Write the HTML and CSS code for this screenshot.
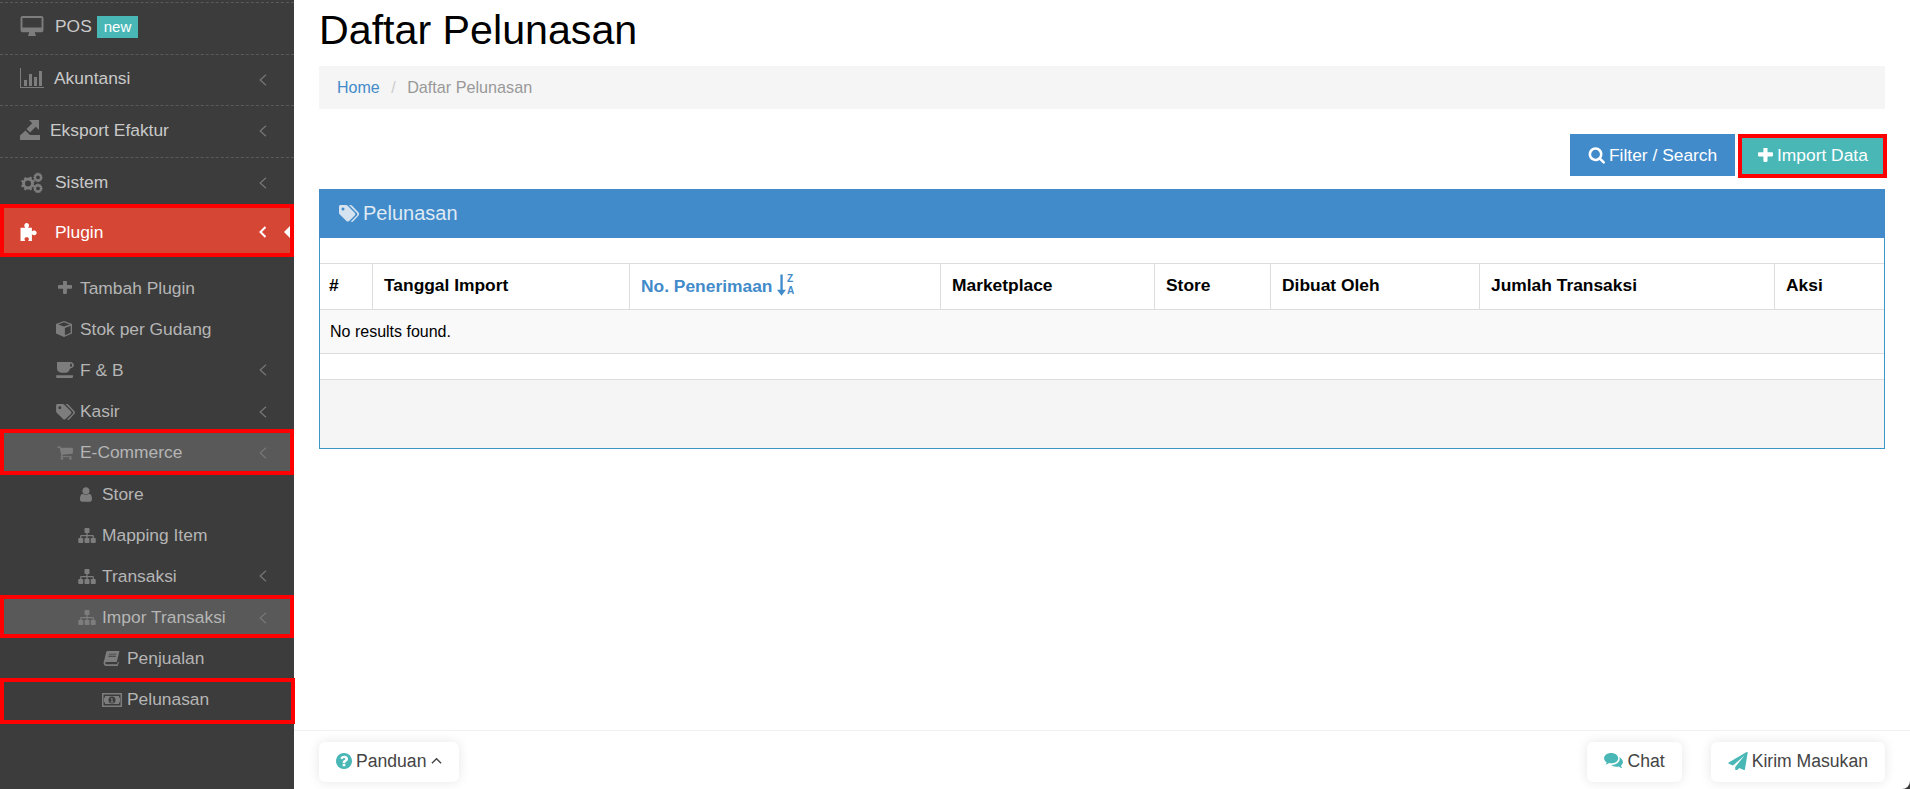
FILE: index.html
```html
<!DOCTYPE html>
<html lang="id">
<head>
<meta charset="utf-8">
<title>Daftar Pelunasan</title>
<link rel="stylesheet" href="styles.css">
</head>
<body>
<svg class="sprite" aria-hidden="true">
  <symbol id="i-desktop" viewBox="0 0 24 22"><path d="M2 0h20a2 2 0 0 1 2 2v13a2 2 0 0 1-2 2h-7c0 1.500.6 2.200 1 3v1H8v-1c.4-.8 1-1.500 1-3H2a2 2 0 0 1-2-2V2a2 2 0 0 1 2-2zm0 2v10h20V2z"/></symbol>
  <symbol id="i-chart" viewBox="0 0 24 20"><path d="M0 0h1v19h23v1H0z"/><path d="M4 12h3v6H4zM9 6h3v12H9zM14 9h3v9h-3zM19 3h3v15h-3z"/></symbol>
  <symbol id="i-export" viewBox="0 0 20 20"><path d="M9 0h10v10l-3.200-3.200L10 12.500 6.500 9l5.700-5.800z"/><path d="M0 15.500l5.500-5 4.500 4.500H20v5H0z"/></symbol>
  <symbol id="i-cogs" viewBox="0 0 23 21"><path d="M8 5.500l1.300.3.800-1.300 2 1.100-.6 1.400 1 1 1.400-.6 1.100 2-1.300.8.300 1.300-.3 1.300 1.300.8-1.100 2-1.400-.6-1 1 .6 1.400-2 1.100-.8-1.300L8 17.500l-1.300-.3-.8 1.300-2-1.100.6-1.400-1-1-1.400.6-1.100-2 1.300-.8-.3-1.300.3-1.300L.9 9.800 2 7.800l1.400.6 1-1-.6-1.400 2-1.100.8 1.300zm0 3a3 3 0 1 0 0 6 3 3 0 0 0 0-6z"/><path d="M18 0l.8 1.400 1.500-.4.400 1.500 1.500.4-.4 1.500 1.200 1-1.200 1 .4 1.500-1.500.4-.4 1.500-1.500-.4-.8 1-.8-1-1.500.4-.4-1.500-1.500-.4.400-1.500-1.200-1 1.200-1-.4-1.500 1.500-.4.400-1.500 1.500.4zm0 3.500a1.900 1.900 0 1 0 0 3.800 1.900 1.900 0 0 0 0-3.800zM18 11l.8 1.400 1.500-.4.400 1.500 1.500.4-.4 1.500 1.200 1-1.200 1 .4 1.500-1.500.4-.4 1.500-1.500-.4-.8 1-.8-1-1.500.4-.4-1.500-1.500-.4.400-1.500-1.200-1 1.200-1-.4-1.500 1.500-.4.400-1.500 1.500.4zm0 3.500a1.900 1.900 0 1 0 0 3.800 1.900 1.900 0 0 0 0-3.800z" fill-rule="evenodd"/></symbol>
  <symbol id="i-puzzle" viewBox="0 0 20 19"><path d="M0 5h5c-.6-.8-1-1.400-1-2.300C4 1.100 5 0 6.500 0S9 1.100 9 2.700c0 .9-.4 1.500-1 2.300h4v4c.8-.8 1.500-1.100 2.500-1.100 1.600 0 2.500 1.100 2.500 2.500S16.100 13 14.500 13c-1 0-1.700-.4-2.500-1.100V19H8c.5-.7.800-1.300.8-2 0-1.300-1-2-2.300-2s-2.300.7-2.300 2c0 .7.300 1.300.8 2H0z"/></symbol>
  <symbol id="i-plus" viewBox="200 240 1400 1400"><path d="M1600 736v192q0 40-28 68t-68 28h-416v416q0 40-28 68t-68 28h-192q-40 0-68-28t-28-68v-416h-416q-40 0-68-28t-28-68v-192q0-40 28-68t68-28h416v-416q0-40 28-68t68-28h192q40 0 68 28t28 68v416h416q40 0 68 28t28 68z"/></symbol>
  <symbol id="i-cube" viewBox="0 0 18 18"><path d="M9 0l9 3.500V14l-9 4-9-4V3.500zM2.500 3.800L9 6.300l6.500-2.500L9 1.400zM10 7.800v8.300l6.500-3V5.300z"/></symbol>
  <symbol id="i-coffee" viewBox="0 0 20 18"><path d="M1 0h15c2.200 0 4 1.500 4 3.500S18.200 7.200 16 7.200h-.4c-.5 2.700-2.300 4.800-5 4.800H6C3 12 1 9.500 1 7zM15.800 1.800v3.600h.4c1 0 1.800-.8 1.800-1.800s-.8-1.800-1.800-1.800zM0 15h19v1.500c0 .8-.7 1.500-1.500 1.500h-16C.7 18 0 17.300 0 16.500z"/></symbol>
  <symbol id="i-tag" viewBox="0 0 20 17"><path d="M1.500 0H7c.6 0 1.200.3 1.700.7l7 7c.8.800.8 2 0 2.800l-5.500 5.500c-.8.800-2 .8-2.800 0l-7-7C0 8.600 0 8 0 7.300V1.500C0 .7.700 0 1.500 0zM4 2.500A1.500 1.500 0 1 0 4 5.500 1.500 1.500 0 0 0 4 2.500z"/><path d="M10 0h1.500c.6 0 1.200.3 1.700.7l6.300 6.900c.8.800.8 2 0 2.800l-5.500 6c-.6.600-1.400.6-2.200.2l6-6.200c.6-.7.600-1.800 0-2.500z"/></symbol>
  <symbol id="i-cart" viewBox="0 0 1792 1792"><path d="M704 1536q0 52-38 90t-90 38-90-38-38-90 38-90 90-38 90 38 38 90zm896 0q0 52-38 90t-90 38-90-38-38-90 38-90 90-38 90 38 38 90zm128-1088v512q0 24-16.500 42.500t-40.500 21.500l-1044 122q13 60 13 70 0 16-24 64h920q26 0 45 19t19 45-19 45-45 19h-1024q-26 0-45-19t-19-45q0-11 8-31.500t16-36 21.500-40 15.500-29.500l-177-823h-204q-26 0-45-19t-19-45 19-45 45-19h256q16 0 28.500 6.500t19.500 15.500 13 24.500 8 26 5.500 29.500 4.500 26h1201q26 0 45 19t19 45z"/></symbol>
  <symbol id="i-user" viewBox="200 100 1400 1600"><path d="M1536 1399q0 109-62.500 187t-150.500 78h-854q-88 0-150.500-78t-62.500-187q0-85 8.500-160.500t31.500-152 58.500-131 94-89 134.500-34.500q131 128 313 128t313-128q76 0 134.500 34.500t94 89 58.500 131 31.500 152 8.500 160.500zm-256-887q0 159-112.500 271.500t-271.500 112.500-271.500-112.500-112.500-271.500 112.500-271.500 271.500-112.500 271.500 112.500 112.500 271.500z"/></symbol>
  <symbol id="i-sitemap" viewBox="0 128 1792 1536"><path d="M1792 1248v320q0 40-28 68t-68 28h-320q-40 0-68-28t-28-68v-320q0-40 28-68t68-28h96v-192h-512v192h96q40 0 68 28t28 68v320q0 40-28 68t-68 28h-320q-40 0-68-28t-28-68v-320q0-40 28-68t68-28h96v-192h-512v192h96q40 0 68 28t28 68v320q0 40-28 68t-68 28h-320q-40 0-68-28t-28-68v-320q0-40 28-68t68-28h96v-192q0-52 38-90t90-38h512v-192h-96q-40 0-68-28t-28-68v-320q0-40 28-68t68-28h320q40 0 68 28t28 68v320q0 40-28 68t-68 28h-96v192h512q52 0 90 38t38 90v192h96q40 0 68 28t28 68z"/></symbol>
  <symbol id="i-book" viewBox="0 0 18 17"><path d="M4.500 0H18l-3 12.500H3.300C2.300 12.500 2 13.200 2 13.800c0 .7.500 1.200 1.300 1.200h12.200L16 12.900l1.800-.9L16 17H3C1.200 17 0 15.600 0 13.800c0-.6.100-1.100.3-1.700L3 1.500C3.200.6 3.700 0 4.500 0zM6 3v1h8.500V3zM5.500 5.500v1H14v-1z"/></symbol>
  <symbol id="i-money" viewBox="0 0 20 14"><path d="M0 0h20v14H0zm1.500 1.500v11h17v-11zM3 3h14c0 1.500.5 2 1 2v4c-.5 0-1 .5-1 2H3c0-1.500-.5-2-1-2V5c.5 0 1-.5 1-2zm7 0.500a3.500 3.500 0 1 0 0 7 3.500 3.500 0 0 0 0-7zM9 5h1.500v3.500h1v1h-3v-1h1V6.200H9z" fill-rule="evenodd"/></symbol>
  <symbol id="i-search" viewBox="0 128 1728 1664"><path d="M1216 832q0-185-131.500-316.500t-316.500-131.500-316.500 131.500-131.500 316.500 131.500 316.500 316.500 131.500 316.500-131.500 131.500-316.500zm512 832q0 52-38 90t-90 38q-54 0-90-38l-343-342q-179 124-399 124-143 0-273.500-55.500t-225-150-150-225-55.500-273.500 55.500-273.500 150-225 225-150 273.500-55.500 273.500 55.500 225 150 150 225 55.500 273.500q0 220-124 399l343 343q37 37 37 90z"/></symbol>
  <symbol id="i-question" viewBox="128 128 1536 1536"><path d="M1024 1376v-192q0-14-9-23t-23-9h-192q-14 0-23 9t-9 23v192q0 14 9 23t23 9h192q14 0 23-9t9-23zm256-672q0-88-55.500-163t-138.500-116-170-41q-243 0-371 213-15 24 8 42l132 100q7 6 19 6 16 0 25-12 53-68 86-92 34-24 86-24 48 0 85.500 26t37.500 59q0 38-20 61t-68 45q-63 28-115.500 86.500t-52.500 125.500v36q0 14 9 23t23 9h192q14 0 23-9t9-23q0-19 21.500-49.500t54.500-49.500q32-18 49-28.500t46-35 44.500-48 28-60.500 12.500-81zm384 192q0 209-103 385.500t-279.500 279.500-385.500 103-385.500-103-279.500-279.500-103-385.500 103-385.500 279.500-279.500 385.500-103 385.500 103 279.500 279.500 103 385.500z"/></symbol>
  <symbol id="i-comments" viewBox="0 0 20 17"><path d="M7.500 0C11.600 0 15 2.400 15 5.500S11.600 11 7.500 11c-.8 0-1.500-.1-2.200-.3C4.300 11.500 3 12.200 1.500 12.500c.6-.8 1-1.600 1.200-2.700C1 8.800 0 7.300 0 5.500 0 2.400 3.400 0 7.500 0z"/><path d="M16 4.500c2.400.9 4 2.800 4 5 0 1.500-.8 2.900-2 3.900.2 1.100.6 2 1.200 2.800-1.500-.3-2.800-1-3.800-1.900-.8.200-1.500.3-2.400.3-2.200 0-4.100-.7-5.400-1.800 4.700.2 9-2.800 9-6.800 0-.5-.2-1-.6-1.500z"/></symbol>
  <symbol id="i-plane" viewBox="0 0 1792 1664"><path d="M1764 11q33 24 27 64l-256 1536q-5 29-32 45-14 8-31 8-11 0-24-5l-453-185-242 295q-18 23-49 23-13 0-22-4-19-7-30.500-23.500t-11.500-36.500v-349l864-1059-1069 925-395-162q-37-14-40-55-2-40 32-59l1664-960q15-9 32-9 20 0 36 11z"/></symbol>
  <symbol id="i-chev" viewBox="0 0 8 12"><path d="M7 .7L1.200 6 7 11.300" fill="none" stroke="currentColor" stroke-width="1.200"/></symbol>
  <symbol id="i-chev-b" viewBox="0 0 8 12"><path d="M6.500 1L1.500 6l5 5" fill="none" stroke="currentColor" stroke-width="2"/></symbol>
  <symbol id="i-up" viewBox="0 0 12 8"><path d="M1 6.500L6 1.500l5 5" fill="none" stroke="currentColor" stroke-width="1.500"/></symbol>
</svg>
<div class="app">
  <aside class="sidebar">
    <ul class="menu">
      <li class="item item-pos"><svg class="ic ic-desktop"><use href="#i-desktop"/></svg><span class="lbl">POS</span><span class="badge">new</span></li>
      <li class="item item-akun"><svg class="ic ic-chart"><use href="#i-chart"/></svg><span class="lbl">Akuntansi</span><svg class="chev"><use href="#i-chev"/></svg></li>
      <li class="item item-eks"><svg class="ic ic-export"><use href="#i-export"/></svg><span class="lbl">Eksport Efaktur</span><svg class="chev"><use href="#i-chev"/></svg></li>
      <li class="item"><svg class="ic ic-cogs"><use href="#i-cogs"/></svg><span class="lbl">Sistem</span><svg class="chev"><use href="#i-chev"/></svg></li>
      <li class="item active mark mark-plugin"><svg class="ic ic-puzzle"><use href="#i-puzzle"/></svg><span class="lbl">Plugin</span><svg class="chev-b"><use href="#i-chev-b"/></svg><span class="pointer"></span></li>
    </ul>
    <ul class="sub">
      <li class="row lv1"><svg class="si si-plus"><use href="#i-plus"/></svg><span>Tambah Plugin</span></li>
      <li class="row lv1"><svg class="si si-cube"><use href="#i-cube"/></svg><span>Stok per Gudang</span></li>
      <li class="row lv1"><svg class="si si-coffee"><use href="#i-coffee"/></svg><span>F &amp; B</span><svg class="chev"><use href="#i-chev"/></svg></li>
      <li class="row lv1"><svg class="si si-tag"><use href="#i-tag"/></svg><span>Kasir</span><svg class="chev"><use href="#i-chev"/></svg></li>
      <li class="row lv1 open mark mark-ecom"><svg class="si si-cart"><use href="#i-cart"/></svg><span>E-Commerce</span><svg class="chev"><use href="#i-chev"/></svg></li>
      <li class="row lv2"><svg class="si si-user"><use href="#i-user"/></svg><span>Store</span></li>
      <li class="row lv2"><svg class="si si-map"><use href="#i-sitemap"/></svg><span>Mapping Item</span></li>
      <li class="row lv2"><svg class="si si-map"><use href="#i-sitemap"/></svg><span>Transaksi</span><svg class="chev"><use href="#i-chev"/></svg></li>
      <li class="row lv2 open mark mark-impor"><svg class="si si-map"><use href="#i-sitemap"/></svg><span>Impor Transaksi</span><svg class="chev"><use href="#i-chev"/></svg></li>
      <li class="row lv3"><svg class="si si-book"><use href="#i-book"/></svg><span>Penjualan</span></li>
      <li class="row lv3 mark mark-pel"><svg class="si si-money"><use href="#i-money"/></svg><span>Pelunasan</span></li>
    </ul>
  </aside>
  <main class="main">
    <div class="content">
      <h1 class="title">Daftar Pelunasan</h1>
      <nav class="crumb"><a class="crumb-link">Home</a><span class="crumb-sep">/</span><span class="crumb-cur">Daftar Pelunasan</span></nav>
      <div class="toolbar">
        <button class="btn btn-blue"><svg class="bi bi-search"><use href="#i-search"/></svg>Filter / Search</button>
        <button class="btn btn-teal mark mark-import"><svg class="bi bi-plus"><use href="#i-plus"/></svg>Import Data</button>
      </div>
      <section class="panel">
        <header class="panel-head"><svg class="ph-ic"><use href="#i-tag"/></svg>Pelunasan</header>
        <div class="gap"></div>
        <table class="grid">
          <colgroup>
            <col class="c1"><col class="c2"><col class="c3"><col class="c4"><col class="c5"><col class="c6"><col class="c7"><col class="c8">
          </colgroup>
          <thead>
            <tr>
              <th class="hash">#</th>
              <th>Tanggal Import</th>
              <th class="sorted">No. Penerimaan <svg class="sort" viewBox="0 0 16 20"><path d="M3.200 0h2.200v14.500h3L4.300 20 0 14.500h3.200z"/><text class="sort-t" x="9.500" y="7.500">Z</text><text class="sort-t" x="9.500" y="18.500">A</text></svg></th>
              <th>Marketplace</th>
              <th>Store</th>
              <th>Dibuat Oleh</th>
              <th>Jumlah Transaksi</th>
              <th>Aksi</th>
            </tr>
          </thead>
          <tbody>
            <tr><td colspan="8">No results found.</td></tr>
          </tbody>
        </table>
        <div class="gap gap-b"></div>
        <div class="panel-foot"></div>
      </section>
    </div>
    <footer class="foot">
      <button class="fbtn"><svg class="fi fi-q"><use href="#i-question"/></svg>Panduan<svg class="fi-up"><use href="#i-up"/></svg></button>
      <div class="foot-right">
        <button class="fbtn"><svg class="fi fi-c"><use href="#i-comments"/></svg>Chat</button>
        <button class="fbtn"><svg class="fi fi-p"><use href="#i-plane"/></svg>Kirim Masukan</button>
      </div>
    </footer>
  </main>
</div>
</body>
</html>
```
FILE: styles.css
```css
* { box-sizing: border-box; }
html, body { margin: 0; height: 100%; }
body { font-family: "Liberation Sans", Arial, sans-serif; font-size: 16px; color: #000; overflow: hidden; background: #3c3c3c; }
.sprite { display: none; }
.app { display: flex; height: 789px; }
svg { fill: currentColor; flex: none; }

.sidebar { width: 294px; flex: none; background: #3c3c3c; color: #c9c9c9; padding-top: 2px; position: relative; font-size: 17.400px; }
.menu, .sub { list-style: none; margin: 0; padding: 0; }
.item { height: 51.500px; border-top: 1px dashed #5a5a5a; display: flex; align-items: center; padding-left: 20px; position: relative; }
.item-pos { padding-bottom: 3px; }
.item-akun { padding-bottom: 3px; }
.item-eks { padding-bottom: 2px; }
.ic { color: #7d7d7d; }
.ic-desktop { width: 24px; height: 21px; margin-right: 11px; }
.ic-chart { width: 24px; height: 20px; margin-right: 10px; }
.ic-export { width: 20px; height: 20px; margin-right: 10px; }
.ic-cogs { width: 23px; height: 21px; margin-right: 12px; }
.ic-puzzle { width: 20px; height: 18px; margin-right: 15px; color: #fff; }
.badge { background: #4ab7b7; color: #fff; font-size: 15px; line-height: 22px; padding: 0 7px; margin-left: 5px; }
.active { background: #d64635; color: #fff; height: 48px; border-top: 0; }
.chev { position: absolute; left: 259px; top: 50%; margin-top: -6px; width: 8px; height: 12px; color: #777; }
.chev-b { position: absolute; left: 259px; top: 50%; margin-top: -6px; width: 8px; height: 12px; color: #fff; }
.pointer { position: absolute; left: 284px; top: 50%; margin-top: -8px; width: 0; height: 0; border-style: solid; border-width: 8px 8px 8px 0; border-color: transparent #fff transparent transparent; }

.mark { position: relative; }
.mark::after { content: ""; position: absolute; border: 4px solid #f00; pointer-events: none; }
.mark-plugin::after { left: 0; right: 0; top: -4px; bottom: -1px; }
.mark-ecom::after { left: 0; right: 0; top: -3px; bottom: -2px; }
.mark-impor::after { left: 0; right: 0; top: -2px; bottom: 0; }
.mark-pel::after { left: 0; right: -1px; top: -1px; bottom: -3px; }
.mark-import::after { left: -4px; right: -3px; top: 0; bottom: -1.500px; }

.sub { padding-top: 11.500px; color: #b5b5b5; }
.row { height: 41.200px; display: flex; align-items: center; position: relative; }
.si { color: #7d7d7d; }
.lv1 { padding-left: 56px; }
.lv2 { padding-left: 78px; }
.lv3 { padding-left: 102px; }
.open { background: #595959; }
.si-plus { width: 14px; height: 14px; margin: 0 8px 0 2px; }
.si-cube { width: 16px; height: 16px; margin: 0 8px 0 0; }
.si-coffee { width: 18px; height: 16px; margin: 0 6px 0 0; }
.si-tag { width: 19px; height: 16px; margin: 0 5px 0 0; }
.si-cart { width: 18px; height: 17px; margin: 0 6px 0 0; }
.si-user { width: 14px; height: 15px; margin: 0 9px 0 1px; }
.si-map { width: 18px; height: 15px; margin: 0 6px 0 0; }
.si-book { width: 17px; height: 15px; margin: 0 7px 0 1px; }
.si-money { width: 20px; height: 14px; margin: 0 5px 0 0; }

.main { flex: 1; min-width: 0; display: flex; flex-direction: column; background: #fff; border-bottom-right-radius: 8px; }
.content { flex: 1; padding: 0 25px 0 25px; }
.title { font-size: 41.200px; font-weight: normal; line-height: 46px; margin: 7px 0 13px; }
.crumb { background: #f5f5f5; height: 43px; display: flex; align-items: center; padding: 0 18px; color: #999; }
.crumb-link { color: #428bca; }
.crumb-sep { color: #ccc; margin: 0 11.500px; }
.crumb-cur { font-size: 16.200px; }
.toolbar { display: flex; justify-content: flex-end; gap: 7px; margin-top: 25px; padding-right: 1px; }
.btn { border: 0; height: 42px; font: inherit; font-size: 17.400px; color: #fff; display: flex; align-items: center; padding: 0 18px; white-space: nowrap; }
.btn-blue { background: #428bca; width: 165px; }
.btn-teal { background: #4ab7b7; width: 142px; padding-left: 16px; }
.bi { margin-right: 4px; }
.bi-search { width: 17px; height: 17px; }
.bi-plus { width: 15px; height: 15px; }

.panel { margin-top: 13px; border: 1px solid #3c96c8; border-top: 0; width: 100%; height: 260px; display: flex; flex-direction: column; }
.panel-head { background: #428bca; color: #dfe9f3; margin: 0 -1px; height: 49px; display: flex; align-items: center; padding-left: 20px; font-size: 20px; }
.ph-ic { width: 20px; height: 17px; margin-right: 4px; color: #d5e3f0; }
.gap { height: 25px; background: #fff; }
.gap-b { height: 26px; border-bottom: 1px solid #ddd; }
.grid { width: 100%; border-collapse: collapse; table-layout: fixed; }
.c1 { width: 52px; } .c2 { width: 257px; } .c3 { width: 311px; } .c4 { width: 214px; }
.c5 { width: 116px; } .c6 { width: 209px; } .c7 { width: 295px; }
.grid th { height: 46px; padding: 0 11px 2px 11.500px; text-align: left; font-weight: bold; font-size: 17.400px; border: 1px solid #ddd; }
.grid th:first-child { border-left: 0; }
.grid th:last-child { border-right: 0; }
.grid th.hash { padding-left: 9px; }
.sorted { color: #428bca; white-space: nowrap; }
.sort { width: 17px; height: 22px; vertical-align: -4px; }
.sort-t { font-size: 9.500px; font-weight: bold; fill: #428bca; }
.grid td { height: 44px; padding: 0 10px; background: #f9f9f9; border-bottom: 1px solid #ddd; }
.panel-foot { flex: 1; background: #f5f5f5; }

.foot { height: 59px; flex: none; border-top: 1px solid #eef1f1; display: flex; justify-content: space-between; align-items: flex-start; padding: 11px 25px 0 25px; }
.foot-right { display: flex; gap: 29px; }
.fbtn { height: 40px; border: 0; background: #fff; border-radius: 6px; box-shadow: 0 0 12px rgba(0,0,0,.1); font: inherit; font-size: 17.600px; color: #444; display: flex; align-items: center; padding: 0 17px 2px; }
.fi { color: #4ab7b7; margin-right: 4px; }
.fi-q { width: 16px; height: 16px; }
.fi-c { width: 19px; height: 16px; }
.fi-p { width: 20px; height: 18px; }
.fi-up { width: 11px; height: 8px; margin-left: 5px; }
```
